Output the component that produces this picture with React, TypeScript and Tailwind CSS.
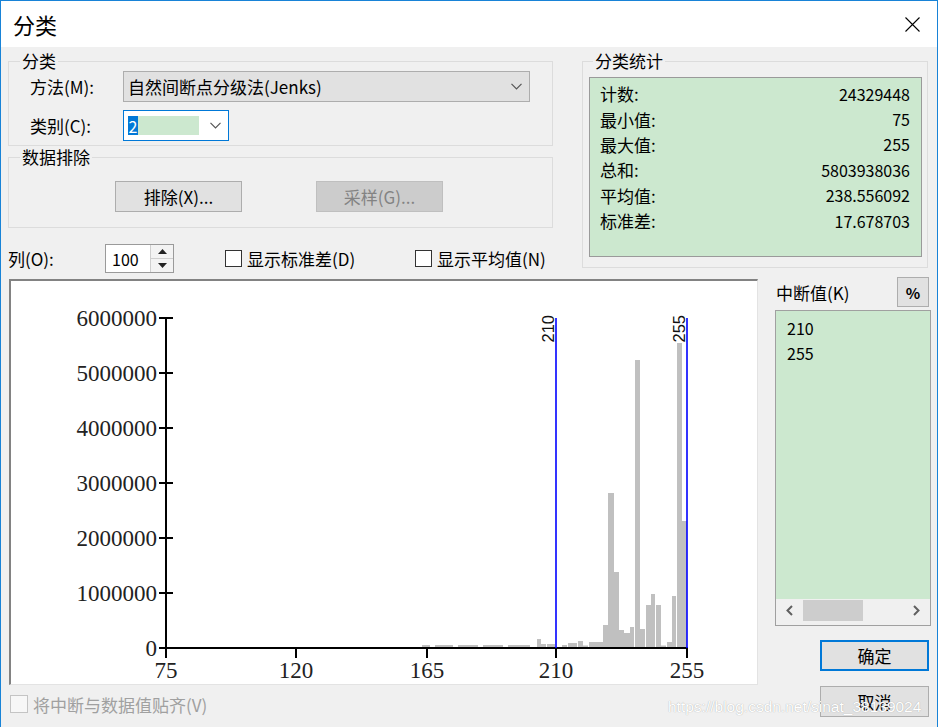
import React from 'react';

// histogram bars in page coordinates: [x0, x1, height]
const bars: [number, number, number][] = [
  [422, 430, 2], [435, 453, 2], [458, 478, 2], [483, 503, 2], [508, 530, 2],
  [537, 541, 8], [541, 546, 3], [547, 555, 3],
  [562, 567, 2], [568, 577, 4], [578, 583, 6], [583, 588, 1.5], [589, 603, 5],
  [603, 608, 22], [608, 614, 154], [614, 619, 75], [619, 624, 17], [624, 630, 14], [630, 634, 20],
  [635, 640, 287], [640, 645, 18], [646, 651, 42], [651, 655, 53], [656, 661, 42], [661, 666, 1.5],
  [667, 672, 5], [672, 676, 51], [677, 682, 304], [682, 687, 126],
];

const yTicks = ['6000000', '5000000', '4000000', '3000000', '2000000', '1000000', '0'];
const xTicks: [number, string][] = [[166, '75'], [296, '120'], [427, '165'], [556, '210'], [687, '255']];

const stats: [string, string][] = [
  ['计数:', '24329448'],
  ['最小值:', '75'],
  ['最大值:', '255'],
  ['总和:', '5803938036'],
  ['平均值:', '238.556092'],
  ['标准差:', '17.678703'],
];

const Chevron = () => (
  <svg width="11" height="7" viewBox="0 0 11 7">
    <path d="M0.5 0.8 L5.5 5.8 L10.5 0.8" fill="none" stroke="#555" strokeWidth="1.2" />
  </svg>
);

const Histogram = () => (
  <svg width="746" height="403" viewBox="11 283 746 403" className="block">
    {bars.map(([x0, x1, h], i) => (
      <rect key={i} x={x0} y={649 - h} width={x1 - x0} height={h} fill="#c0c0c0" />
    ))}
    <line x1="166" y1="319" x2="166" y2="651" stroke="#000" strokeWidth="2" />
    <line x1="165" y1="650" x2="688" y2="650" stroke="#000" strokeWidth="2" />
    {yTicks.map((t, i) => (
      <g key={t}>
        <line x1="159" y1={320 + i * 55} x2="173" y2={320 + i * 55} stroke="#000" strokeWidth="2" />
        <text x="157" y={328 + i * 55} textAnchor="end" fontSize="23" fontFamily="'Liberation Serif', serif" fill="#222">{t}</text>
      </g>
    ))}
    {xTicks.map(([x, t]) => (
      <g key={t}>
        <line x1={x} y1="650" x2={x} y2="660" stroke="#000" strokeWidth="2" />
        <text x={x} y="680" textAnchor="middle" fontSize="23" fontFamily="'Liberation Serif', serif" fill="#222">{t}</text>
      </g>
    ))}
    <line x1="556" y1="320" x2="556" y2="650" stroke="#0000ff" strokeWidth="1.6" />
    <line x1="687" y1="320" x2="687" y2="650" stroke="#0000ff" strokeWidth="1.6" />
    <text transform="translate(554 317) rotate(-90)" textAnchor="end" fontSize="16.5" fontFamily="'Liberation Sans', sans-serif" fill="#111">210</text>
    <text transform="translate(685 317) rotate(-90)" textAnchor="end" fontSize="16.5" fontFamily="'Liberation Sans', sans-serif" fill="#111">255</text>
  </svg>
);

export default function App() {
  return (
    <div className="w-[938px] h-[727px] overflow-hidden relative bg-[#f0f0f0] border-l border-t border-r border-[#1883d7] text-[17px] text-black leading-none font-['Noto_Sans_CJK_SC','Noto_Sans',sans-serif]">
      <div className="h-[46px] bg-white flex items-center justify-between pl-[12px] pr-[17px]">
        <span className="text-[22px]">分类</span>
        <svg width="15" height="15" viewBox="0 0 15 15">
          <path d="M0.5 0.5L14.5 14.5M14.5 0.5L0.5 14.5" stroke="#000" strokeWidth="1.1" />
        </svg>
      </div>

      <div className="pl-[7px] pt-[5px]">
        <div className="flex items-start">
          <div className="w-[545px]">
            <fieldset className="border border-[#dcdcdc]">
              <legend className="ml-[11px] px-[2px] leading-[18px]">分类</legend>
              <div className="pl-[21px] pr-[22px] pb-[4px]">
                <div className="mt-[1px] h-[31px] flex items-center">
                  <span className="w-[93px]">方法(M):</span>
                  <div className="flex-1 h-full border border-[#adadad] bg-[#e1e1e1] flex items-center justify-between pl-[4px] pr-[7px]">
                    <span>自然间断点分级法(Jenks)</span>
                    <Chevron />
                  </div>
                </div>
                <div className="mt-[8px] h-[31px] flex items-center">
                  <span className="w-[93px]">类别(C):</span>
                  <div className="w-[106px] h-full border border-[#0078d7] bg-white flex items-center pl-[4px] pr-[7px]">
                    <div className="h-[19px] w-[71px] flex">
                      <span className="w-[10px] bg-[#0078d7] text-white text-[16px] flex items-center justify-center">2</span>
                      <span className="flex-1 bg-[#cce8cf]" />
                    </div>
                    <div className="ml-auto flex">
                      <Chevron />
                    </div>
                  </div>
                </div>
              </div>
            </fieldset>

            <fieldset className="mt-[2px] border border-[#dcdcdc]">
              <legend className="ml-[11px] px-[2px] leading-[18px]">数据排除</legend>
              <div className="pl-[106px] pt-[15px] pb-[15px] flex">
                <div className="w-[127px] h-[31px] border border-[#adadad] bg-[#e1e1e1] flex items-center justify-center">排除(X)...</div>
                <div className="ml-[74px] w-[127px] h-[31px] border border-[#bfbfbf] bg-[#cccccc] text-[#838383] flex items-center justify-center">采样(G)...</div>
              </div>
            </fieldset>

            <div className="mt-[16px] h-[29px] flex items-center">
              <span className="w-[97px]">列(O):</span>
              <div className="w-[69px] h-full border border-[#9a9a9a] bg-white flex">
                <span className="flex-1 flex items-center pl-[6px] text-[16px]">100</span>
                <div className="w-[23px] border-l border-[#cfcfcf] bg-[#f3f3f3] flex flex-col">
                  <div className="flex-1 flex items-center justify-center border-b border-[#cfcfcf]">
                    <svg width="9" height="5" viewBox="0 0 9 5"><path d="M0 5 L4.5 0 L9 5 Z" fill="#222" /></svg>
                  </div>
                  <div className="flex-1 flex items-center justify-center">
                    <svg width="9" height="5" viewBox="0 0 9 5"><path d="M0 0 L4.5 5 L9 0 Z" fill="#222" /></svg>
                  </div>
                </div>
              </div>
              <div className="ml-[51px] w-[190px] flex items-center">
                <span className="w-[17px] h-[17px] border border-[#333] bg-white" />
                <span className="ml-[5px]">显示标准差(D)</span>
              </div>
              <div className="flex items-center">
                <span className="w-[17px] h-[17px] border border-[#333] bg-white" />
                <span className="ml-[5px]">显示平均值(N)</span>
              </div>
            </div>
          </div>

          <fieldset className="ml-[29px] w-[346px] border border-[#dcdcdc]">
            <legend className="ml-[10px] px-[2px] leading-[18px]">分类统计</legend>
            <div className="pl-[6px] pt-[7px] pb-[10px]">
              <div className="w-[333px] h-[180px] border border-[#9a9a9a] bg-[#cce8cf] pl-[10px] pr-[11px] pt-[3px]">
                {stats.map(([k, v]) => (
                  <div key={k} className="h-[25.4px] flex items-center justify-between">
                    <span>{k}</span>
                    <span className="text-[16px]">{v}</span>
                  </div>
                ))}
              </div>
            </div>
          </fieldset>
        </div>

        <div className="mt-[4px] flex items-start">
          <div>
            <div className="ml-[1px] mt-[2px] w-[749px] h-[406px] bg-white border-t-2 border-l-2 border-r border-b border-t-[#828282] border-l-[#828282] border-r-[#e3e3e3] border-b-[#e3e3e3]">
              <Histogram />
            </div>
            <div className="mt-[10px] ml-[2px] flex items-center">
              <span className="w-[18px] h-[18px] border border-[#c4c4c4] bg-[#f7f7f7]" />
              <span className="ml-[5px] text-[#a0a0a0]">将中断与数据值贴齐(V)</span>
            </div>
          </div>

          <div className="ml-[17px] w-[156px]">
            <div className="h-[30px] flex items-center justify-between pl-[1px] pr-[2px]">
              <span>中断值(K)</span>
              <div className="w-[32px] h-full border border-[#adadad] bg-[#e1e1e1] flex items-center justify-center text-[15px] font-semibold">%</div>
            </div>
            <div className="mt-[3px] h-[316px] border border-[#a0a0a0] bg-[#cce8cf] flex flex-col">
              <div className="flex-1 pl-[11px] pt-[4px] text-[16px]">
                <div className="h-[25px] flex items-center">210</div>
                <div className="h-[25px] flex items-center">255</div>
              </div>
              <div className="h-[26px] bg-[#f0f0f0] pb-[3px] flex items-center">
                <div className="w-[27px] h-full flex items-center justify-center">
                  <svg width="7" height="11" viewBox="0 0 7 11"><path d="M6 1 L1.5 5.5 L6 10" fill="none" stroke="#606060" strokeWidth="2" /></svg>
                </div>
                <div className="w-[60px] h-[21px] bg-[#cdcdcd]" />
                <div className="flex-1" />
                <div className="w-[27px] h-full flex items-center justify-center">
                  <svg width="7" height="11" viewBox="0 0 7 11"><path d="M1 1 L5.5 5.5 L1 10" fill="none" stroke="#606060" strokeWidth="2" /></svg>
                </div>
              </div>
            </div>
            <div className="mt-[14px] ml-[45px] w-[109px] h-[31px] border-2 border-[#0078d7] bg-[#e1e1e1] flex items-center justify-center">确定</div>
            <div className="mt-[15px] ml-[45px] w-[109px] h-[31px] border border-[#adadad] bg-[#e1e1e1] flex items-center justify-center">取消</div>
          </div>
        </div>
      </div>

      <span className="absolute left-[667px] top-[698px] text-[15.5px] text-white font-['Liberation_Sans',sans-serif] [text-shadow:0_0_1px_#9a9a9a] pointer-events-none">https://blog.csdn.net/sinat_38139024</span>
    </div>
  );
}
